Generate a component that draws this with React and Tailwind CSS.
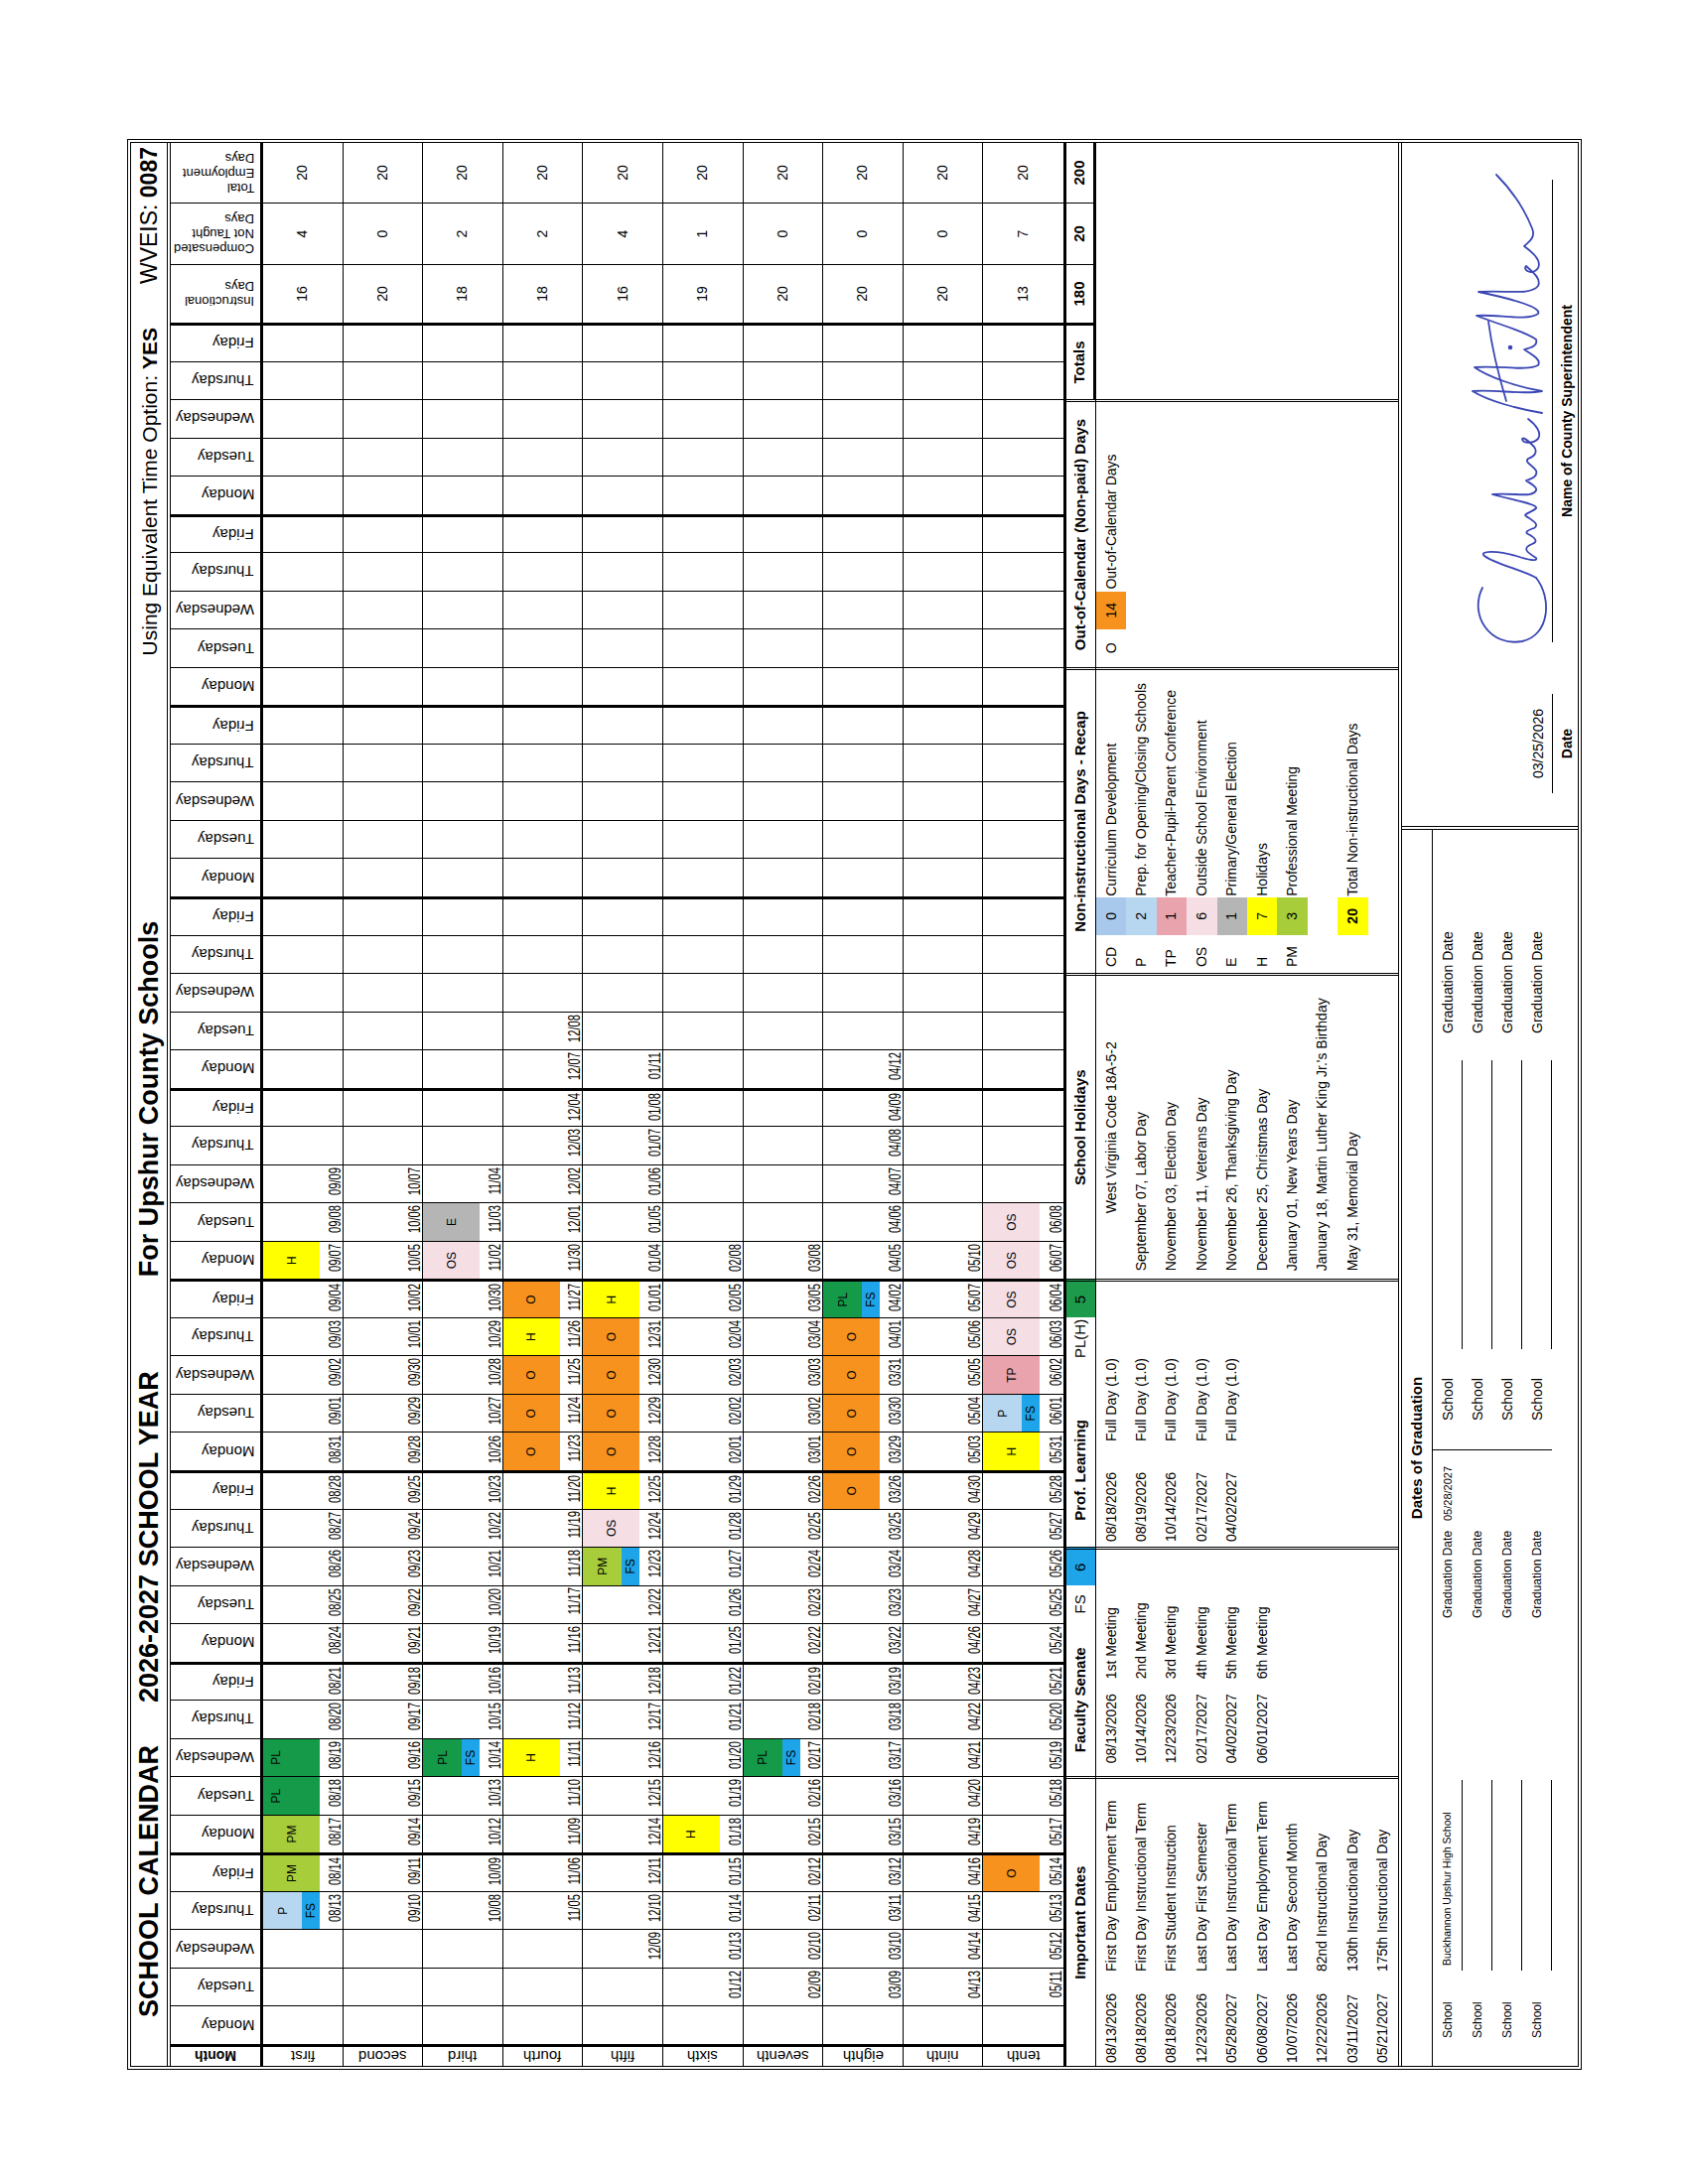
import React from 'react';

const DAYS = ['Monday', 'Tuesday', 'Wednesday', 'Thursday', 'Friday'];

// each month row: first date, number of weekday cells, summary columns
const MONTH_ROWS = [
  { name: 'first', start: [2026, 8, 13], n: 20, inst: 16, comp: 4 },
  { name: 'second', start: [2026, 9, 10], n: 20, inst: 20, comp: 0 },
  { name: 'third', start: [2026, 10, 8], n: 20, inst: 18, comp: 2 },
  { name: 'fourth', start: [2026, 11, 5], n: 24, inst: 18, comp: 2 },
  { name: 'fifth', start: [2026, 12, 9], n: 24, inst: 16, comp: 4 },
  { name: 'sixth', start: [2027, 1, 12], n: 20, inst: 19, comp: 1 },
  { name: 'seventh', start: [2027, 2, 9], n: 20, inst: 20, comp: 0 },
  { name: 'eighth', start: [2027, 3, 9], n: 25, inst: 20, comp: 0 },
  { name: 'ninth', start: [2027, 4, 13], n: 20, inst: 20, comp: 0 },
  { name: 'tenth', start: [2027, 5, 11], n: 21, inst: 13, comp: 7 },
];

const CODES = {
  '08/13': ['P', 'FS'],
  '08/14': 'PM',
  '08/17': 'PM',
  '08/18': 'PL',
  '08/19': 'PL',
  '09/07': 'H',
  '10/14': ['PL', 'FS'],
  '11/02': 'OS',
  '11/03': 'E',
  '11/11': 'H',
  '11/23': 'O',
  '11/24': 'O',
  '11/25': 'O',
  '11/26': 'H',
  '11/27': 'O',
  '12/23': ['PM', 'FS'],
  '12/24': 'OS',
  '12/25': 'H',
  '12/28': 'O',
  '12/29': 'O',
  '12/30': 'O',
  '12/31': 'O',
  '01/01': 'H',
  '01/18': 'H',
  '02/17': ['PL', 'FS'],
  '03/26': 'O',
  '03/29': 'O',
  '03/30': 'O',
  '03/31': 'O',
  '04/01': 'O',
  '04/02': ['PL', 'FS'],
  '05/14': 'O',
  '05/31': 'H',
  '06/01': ['P', 'FS'],
  '06/02': 'TP',
  '06/03': 'OS',
  '06/04': 'OS',
  '06/07': 'OS',
  '06/08': 'OS',
};

const CODE_BG = {
  P: 'bg-[#b7d7f1]',
  PM: 'bg-[#a7ce3a]',
  PL: 'bg-[#159a49]',
  H: 'bg-[#ffff00]',
  O: 'bg-[#f7921e]',
  OS: 'bg-[#f5dfe5]',
  TP: 'bg-[#e9a3ad]',
  E: 'bg-[#b5b5b5]',
};

const IMPORTANT = [
  ['08/13/2026', 'First Day Employment Term'],
  ['08/18/2026', 'First Day Instructional Term'],
  ['08/18/2026', 'First Student Instruction'],
  ['12/23/2026', 'Last Day First Semester'],
  ['05/28/2027', 'Last Day Instructional Term'],
  ['06/08/2027', 'Last Day Employment Term'],
  ['10/07/2026', 'Last Day Second Month'],
  ['12/22/2026', '82nd Instructional Day'],
  ['03/11/2027', '130th Instructional Day'],
  ['05/21/2027', '175th Instructional Day'],
];

const SENATE = [
  ['08/13/2026', '1st Meeting'],
  ['10/14/2026', '2nd Meeting'],
  ['12/23/2026', '3rd Meeting'],
  ['02/17/2027', '4th Meeting'],
  ['04/02/2027', '5th Meeting'],
  ['06/01/2027', '6th Meeting'],
];

const LEARNING = [
  ['08/18/2026', 'Full Day (1.0)'],
  ['08/19/2026', 'Full Day (1.0)'],
  ['10/14/2026', 'Full Day (1.0)'],
  ['02/17/2027', 'Full Day (1.0)'],
  ['04/02/2027', 'Full Day (1.0)'],
];

const HOLIDAYS = [
  'September 07, Labor Day',
  'November 03, Election Day',
  'November 11, Veterans Day',
  'November 26, Thanksgiving Day',
  'December 25, Christmas Day',
  'January 01, New Years Day',
  "January 18, Martin Luther King Jr.'s Birthday",
  'May 31, Memorial Day',
];

const RECAP = [
  { code: 'CD', n: 0, bg: 'bg-[#a8c8ec]', label: 'Curriculum Development' },
  { code: 'P', n: 2, bg: 'bg-[#b7d7f1]', label: 'Prep. for Opening/Closing Schools' },
  { code: 'TP', n: 1, bg: 'bg-[#e9a3ad]', label: 'Teacher-Pupil-Parent Conference' },
  { code: 'OS', n: 6, bg: 'bg-[#f5dfe5]', label: 'Outside School Environment' },
  { code: 'E', n: 1, bg: 'bg-[#b5b5b5]', label: 'Primary/General Election' },
  { code: 'H', n: 7, bg: 'bg-[#ffff00]', label: 'Holidays' },
  { code: 'PM', n: 3, bg: 'bg-[#a7ce3a]', label: 'Professional Meeting' },
];

// lay a month row's weekdays out over the 45 day columns (Mon = column 0)
function buildRow(row) {
  const [y, m, d] = row.start;
  const date = new Date(Date.UTC(y, m - 1, d));
  const cells = new Array(45).fill(null);
  let col = date.getUTCDay() - 1;
  let count = 0;
  while (count < row.n) {
    const wd = date.getUTCDay();
    if (wd >= 1 && wd <= 5) {
      const mm = String(date.getUTCMonth() + 1).padStart(2, '0');
      const dd = String(date.getUTCDate()).padStart(2, '0');
      cells[col] = `${mm}/${dd}`;
      col += 1;
      count += 1;
    }
    date.setUTCDate(date.getUTCDate() + 1);
  }
  return cells;
}

function VText({ children, className = '' }) {
  return (
    <span className={`[writing-mode:vertical-rl] rotate-180 whitespace-nowrap ${className}`}>
      {children}
    </span>
  );
}

function DayCell({ date, friday, last }) {
  const code = date ? CODES[date] : null;
  const [main, sub] = Array.isArray(code) ? code : [code, null];
  return (
    <div className={`flex flex-col ${friday ? 'border-r-[3px]' : 'border-r'} ${last ? '' : 'border-b'}`}>
      <div className="h-[57px] flex flex-col">
        {main && (
          <div
            className={`flex-1 flex justify-center text-[12px] leading-none ${
              main === 'PL' && !sub ? 'items-start pt-[7px]' : 'items-center'
            } ${CODE_BG[main]}`}
          >
            {main}
          </div>
        )}
        {sub && (
          <div className="h-[18px] flex items-center justify-center text-[12px] leading-none bg-[#1ea5e9]">
            {sub}
          </div>
        )}
      </div>
      <div className="flex-1 flex items-end justify-end pr-[2px] pb-px">
        {date && (
          <span className="inline-block text-[16px] leading-[12px] origin-right scale-x-[0.7]">{date}</span>
        )}
      </div>
    </div>
  );
}

function Signature() {
  return (
    <svg width="480" height="86" viewBox="0 0 480 86" fill="none" stroke="#3a46b4" strokeWidth="1.8" strokeLinecap="round" strokeLinejoin="round">
      <path d="M62 16 C34 2, 2 24, 8 56 C14 84, 52 86, 72 70" />
      <path d="M72 70 C80 56, 86 28, 94 18 C99 12, 100 30, 94 50 C90 62, 88 72, 92 70 C98 60, 102 56, 106 66 C108 72, 112 70, 116 62 C118 58, 120 62, 122 68 C126 74, 130 66, 134 60 C136 56, 138 66, 142 70 C146 72, 150 48, 156 26 C158 48, 152 66, 160 70 C164 72, 168 62, 170 60 C172 66, 174 72, 180 70 C186 66, 188 58, 192 62 C194 68, 198 72, 204 68 C210 62, 214 58, 212 56 C208 56, 206 66, 212 72 C218 76, 226 70, 232 62" />
      <path d="M238 76 C242 52, 250 22, 260 6 C262 30, 256 56, 260 76 C264 52, 274 22, 284 8 C286 34, 280 60, 286 72 C292 76, 298 64, 302 58 C304 66, 306 72, 312 70 C320 60, 328 30, 336 10 C338 30, 330 60, 338 72 C344 76, 352 50, 360 12 C362 40, 356 64, 366 72 C374 76, 382 64, 386 60 C382 56, 376 66, 384 72 C392 76, 400 66, 406 58 C410 62, 414 70, 424 66 C444 58, 462 46, 478 30" />
      <path d="M250 40 C270 34, 300 26, 330 22" />
      <circle cx="304" cy="44" r="1.4" fill="#3a46b4" />
    </svg>
  );
}

export default function App() {
  const rows = MONTH_ROWS.map((r) => ({ ...r, cells: buildRow(r) }));

  return (
    <div className="w-[1700px] h-[2200px] overflow-hidden bg-white text-black font-['Liberation_Sans',Arial,sans-serif]">
      <div className="ml-[128px] mt-[2085px] w-[1945px] h-[1465px] origin-top-left -rotate-90 border-[4px] border-double border-black flex flex-col">
        {/* Title strip */}
        <div className="h-[40px] shrink-0 border-b-[4px] border-double flex items-center pl-[49px] whitespace-nowrap leading-none">
          <span className="text-[27px] font-bold">SCHOOL CALENDAR</span>
          <span className="ml-[43px] text-[27px] font-bold">2026-2027 SCHOOL YEAR</span>
          <span className="ml-[95px] text-[27px] font-bold">For Upshur County Schools</span>
          <span className="ml-auto text-[21px]">
            Using Equivalent Time Option: <b>YES</b>
          </span>
          <span className="ml-[44px] mr-[4px] text-[23px]">
            WVEIS: <b>0087</b>
          </span>
        </div>

        {/* Calendar grid */}
        <div className="h-[899px] shrink-0 grid grid-cols-[22px_repeat(45,minmax(0,1fr))_59px_62px_60px] grid-rows-[93px_repeat(10,minmax(0,1fr))]">
          <div className="border-r-[3px] border-b-[3px] flex items-center justify-center">
            <VText className="text-[14px] font-bold leading-none">Month</VText>
          </div>
          {Array.from({ length: 45 }).map((_, c) => (
            <div
              key={c}
              className={`${c % 5 === 4 ? 'border-r-[3px]' : 'border-r'} border-b-[3px] flex items-end justify-center pb-[6px]`}
            >
              <VText className="text-[15px] leading-none">{DAYS[c % 5]}</VText>
            </div>
          ))}
          <div className="border-r border-b-[3px] flex items-end justify-center pb-[6px]">
            <VText className="text-[13px] leading-[15px]">
              Instructional
              <br />
              Days
            </VText>
          </div>
          <div className="border-r border-b-[3px] flex items-end justify-center pb-[6px]">
            <VText className="text-[13px] leading-[15px]">
              Compensated
              <br />
              Not Taught
              <br />
              Days
            </VText>
          </div>
          <div className="border-b-[3px] flex items-end justify-center pb-[6px]">
            <VText className="text-[13px] leading-[15px]">
              Total
              <br />
              Employment
              <br />
              Days
            </VText>
          </div>

          {rows.map((row, r) => {
            const last = r === rows.length - 1;
            return (
              <React.Fragment key={row.name}>
                <div className={`border-r-[3px] ${last ? '' : 'border-b'} flex items-center justify-center`}>
                  <VText className="text-[15px] leading-none">{row.name}</VText>
                </div>
                {row.cells.map((date, c) => (
                  <DayCell key={c} date={date} friday={c % 5 === 4} last={last} />
                ))}
                <div className={`border-r ${last ? '' : 'border-b'} flex items-center justify-center text-[14px]`}>
                  {row.inst}
                </div>
                <div className={`border-r ${last ? '' : 'border-b'} flex items-center justify-center text-[14px]`}>
                  {row.comp}
                </div>
                <div className={`${last ? '' : 'border-b'} flex items-center justify-center text-[14px]`}>20</div>
              </React.Fragment>
            );
          })}
        </div>

        {/* Lower headings + totals */}
        <div className="h-[33px] shrink-0 border-t-[3px] grid grid-cols-[22px_repeat(45,minmax(0,1fr))_59px_62px_60px] text-[15px] font-bold whitespace-nowrap">
          <div className="col-span-8 border-r-[3px] border-double border-b flex items-center justify-center">Important Dates</div>
          <div className="col-span-4 border-b flex items-center justify-center">Faculty Senate</div>
          <div className="border-b flex items-center justify-center font-normal">FS</div>
          <div className="border-r-[3px] border-double border-b bg-[#1ea5e9] flex items-center justify-center font-normal">6</div>
          <div className="col-span-4 border-b flex items-center justify-center">Prof. Learning</div>
          <div className="col-span-2 border-b flex items-center justify-end pr-[2px] font-normal">PL(H)</div>
          <div className="border-r-[3px] border-double border-b bg-[#1d9a4c] flex items-center justify-center font-normal">5</div>
          <div className="col-span-8 border-r-[3px] border-double border-b flex items-center justify-center">School Holidays</div>
          <div className="col-span-8 border-r-[3px] border-double border-b flex items-center justify-center">Non-instructional Days - Recap</div>
          <div className="col-span-7 border-r-[3px] border-double border-b flex items-center justify-center">Out-of-Calendar (Non-paid) Days</div>
          <div className="col-span-2 border-r-[3px] border-b-[3px] flex items-center justify-center">Totals</div>
          <div className="border-r border-b-[3px] flex items-center justify-center">180</div>
          <div className="border-r border-b-[3px] flex items-center justify-center">20</div>
          <div className="border-b-[3px] flex items-center justify-center">200</div>
        </div>

        {/* Lower lists */}
        <div className="h-[308px] shrink-0 border-b-[4px] border-double grid grid-cols-[22px_repeat(45,minmax(0,1fr))_59px_62px_60px] text-[14px] whitespace-nowrap">
          <div className="col-span-8 border-r-[3px] border-double grid grid-rows-[repeat(10,minmax(0,1fr))]">
            {IMPORTANT.map(([d, t], i) => (
              <div key={i} className="flex items-center">
                <span className="w-[95px] pl-[3px]">{d}</span>
                <span>{t}</span>
              </div>
            ))}
          </div>
          <div className="col-span-6 border-r-[3px] border-double grid grid-rows-[repeat(10,minmax(0,1fr))]">
            {SENATE.map(([d, t], i) => (
              <div key={i} className="flex items-center">
                <span className="w-[98px] pl-[13px]">{d}</span>
                <span>{t}</span>
              </div>
            ))}
          </div>
          <div className="col-span-7 border-r-[3px] border-double grid grid-rows-[repeat(10,minmax(0,1fr))]">
            {LEARNING.map(([d, t], i) => (
              <div key={i} className="flex items-center">
                <span className="w-[106px] pl-[5px]">{d}</span>
                <span>{t}</span>
              </div>
            ))}
          </div>
          <div className="col-span-8 border-r-[3px] border-double grid grid-rows-[repeat(10,minmax(0,1fr))]">
            <div className="flex items-center justify-center">West Virginia Code 18A-5-2</div>
            {HOLIDAYS.map((t, i) => (
              <div key={i} className="flex items-center pl-[8px]">
                {t}
              </div>
            ))}
          </div>
          <div className="col-span-8 border-r-[3px] border-double grid grid-rows-[repeat(10,minmax(0,1fr))]">
            {RECAP.map((item) => (
              <div key={item.code} className="grid grid-cols-[repeat(8,minmax(0,1fr))]">
                <span className="flex items-center pl-[6px]">{item.code}</span>
                <span className={`flex items-center justify-center ${item.bg}`}>{item.n}</span>
                <span className="col-span-6 flex items-center pl-[1px]">{item.label}</span>
              </div>
            ))}
            <div />
            <div className="grid grid-cols-[repeat(8,minmax(0,1fr))]">
              <span />
              <span className="flex items-center justify-center bg-[#ffff00] font-bold">20</span>
              <span className="col-span-6 flex items-center pl-[1px]">Total Non-instructional Days</span>
            </div>
          </div>
          <div className="col-span-7 border-r-[3px] border-double grid grid-rows-[repeat(10,minmax(0,1fr))]">
            <div className="grid grid-cols-[repeat(7,minmax(0,1fr))]">
              <span className="flex items-center justify-center">O</span>
              <span className="flex items-center justify-center bg-[#f7921e]">14</span>
              <span className="col-span-5 flex items-center pl-[2px]">Out-of-Calendar Days</span>
            </div>
          </div>
          <div className="col-span-5" />
        </div>

        {/* Graduation dates + signature */}
        <div className="flex-1 flex">
          <div className="w-[1249px] shrink-0 border-r-[4px] border-double flex flex-col">
            <div className="h-[31px] border-b flex items-center justify-center text-[15px] font-bold">Dates of Graduation</div>
            <div className="flex">
              <div className="w-[621px] border-r">
                {[0, 1, 2, 3].map((i) => (
                  <div key={i} className="h-[30px] flex items-center whitespace-nowrap">
                    <span className="w-[96px] pl-[28px] text-[12px]">School</span>
                    <span className="w-[192px] h-full border-b flex items-center pl-[5px] text-[10.5px]">
                      {i === 0 ? 'Buckhannon Upshur High School' : ''}
                    </span>
                    <span className="w-[163px]" />
                    <span className="w-[98px] text-[12px]">Graduation Date</span>
                    <span className="text-[11px]">{i === 0 ? '05/28/2027' : ''}</span>
                  </div>
                ))}
              </div>
              <div className="flex-1">
                {[0, 1, 2, 3].map((i) => (
                  <div key={i} className="h-[30px] flex items-center whitespace-nowrap text-[14px]">
                    <span className="w-[101px] pl-[29px]">School</span>
                    <span className="w-[291px] h-full border-b" />
                    <span className="pl-[27px]">Graduation Date</span>
                  </div>
                ))}
              </div>
            </div>
          </div>
          <div className="flex-1 flex">
            <div className="w-[166px] flex flex-col items-center justify-end pb-[3px] text-[14px]">
              <span className="leading-[16px]">03/25/2026</span>
              <div className="mt-[6px] w-[100px] border-t" />
              <span className="mt-[6px] leading-[16px] font-bold">Date</span>
            </div>
            <div className="w-[504px] flex flex-col items-center justify-end pb-[3px] text-[14px]">
              <Signature />
              <div className="w-[466px] border-t" />
              <span className="mt-[6px] leading-[16px] font-bold">Name of County Superintendent</span>
            </div>
          </div>
        </div>
      </div>
    </div>
  );
}
